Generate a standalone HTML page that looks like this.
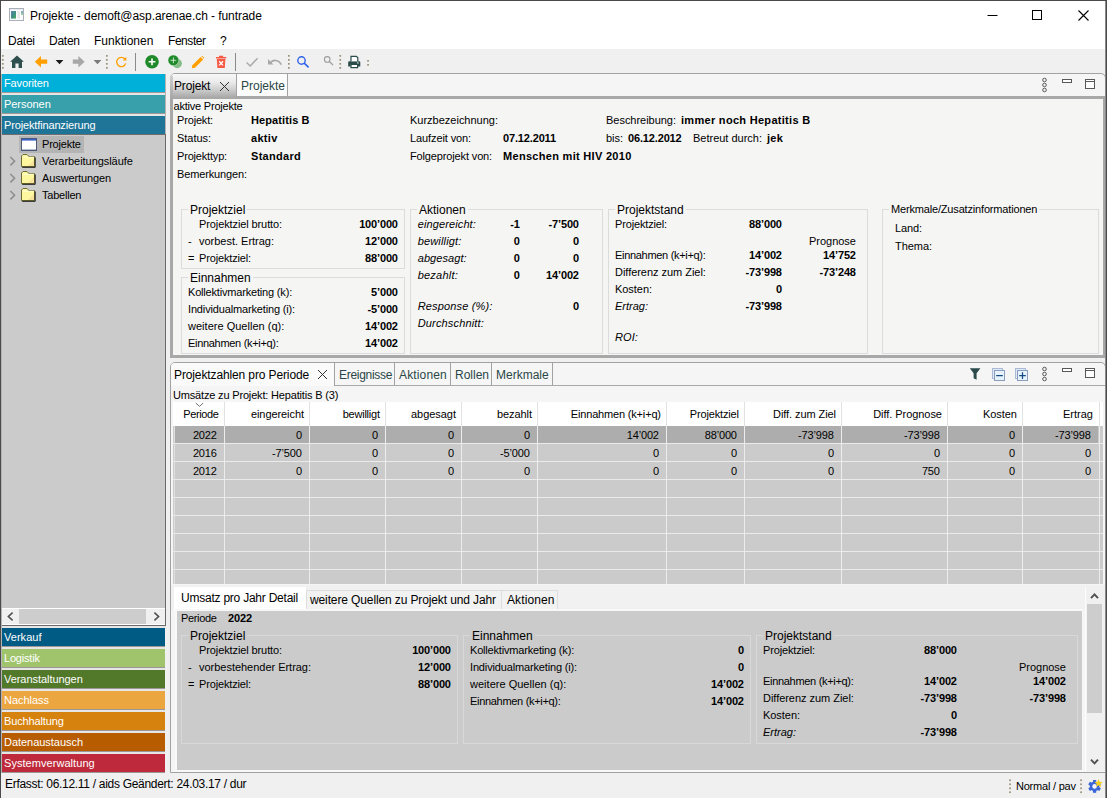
<!DOCTYPE html>
<html><head><meta charset="utf-8"><title>Projekte</title>
<style>
*{box-sizing:border-box;margin:0;padding:0}
html,body{width:1107px;height:798px;overflow:hidden;background:#f0f0f0}
body{font-family:"Liberation Sans",sans-serif;font-size:11px;color:#000;position:relative}
.a{position:absolute}
.t{position:absolute;white-space:nowrap;font-size:11px;line-height:14px;height:14px}
.b{font-weight:bold}
.i{font-style:italic}
.r{text-align:right}
.ui{font-size:12px;line-height:16px;height:16px}
.tl{color:#2a4646}
.bar{position:absolute;left:2px;width:163px;height:18px;color:#fff;font-size:11px;line-height:18px;padding-left:2px;white-space:nowrap}
.gap{position:absolute;left:2px;width:163px;height:1px}
.ar{font-size:11px !important}
.lg{position:absolute;white-space:nowrap;font-size:12px;line-height:14px;height:14px;padding:0 2px}
</style></head><body>
<div class="a" style="left:0px;top:0px;width:1107px;height:798px;border:1px solid #4a4a4a;border-bottom:none"></div>
<div class="a" style="left:1px;top:1px;width:1105px;height:48px;background:#fff"></div>
<svg class="a" style="left:9px;top:8px" width="16" height="14" viewBox="0 0 16 14"><defs><linearGradient id="ig" x1="0" y1="0" x2="1" y2="1"><stop offset="0" stop-color="#5a86b8"/><stop offset="0.5" stop-color="#3e8e84"/><stop offset="1" stop-color="#4cae5c"/></linearGradient><linearGradient id="ig2" x1="0" y1="0" x2="0" y2="1"><stop offset="0" stop-color="#7a9ec8"/><stop offset="1" stop-color="#a4dc98"/></linearGradient></defs><rect x="0.5" y="0.5" width="14" height="12" fill="#fbfbfb" stroke="#a9b0b8"/><rect x="1" y="1" width="13" height="1" fill="#e6eaee"/><rect x="2" y="3" width="5" height="7.6" fill="url(#ig)"/><rect x="8.6" y="3" width="2.2" height="7.6" fill="#e6e6e6"/><rect x="12" y="3" width="2" height="4" fill="url(#ig2)"/></svg>
<div class="t ui" style="left:30px;top:8px;letter-spacing:-0.06px">Projekte - demoft@asp.arenae.ch - funtrade</div>
<svg class="a" style="left:980px;top:5px" width="120" height="22" viewBox="0 0 120 22"><path d="M7.5 10.5h10" stroke="#000" stroke-width="1" fill="none"/><rect x="52.5" y="5.5" width="9" height="9" fill="none" stroke="#000" stroke-width="1"/><path d="M98.5 5.5l10 10M108.5 5.5l-10 10" stroke="#000" stroke-width="1.1" fill="none"/></svg>
<div class="t ui" style="left:8px;top:33px;letter-spacing:-0.25px">Datei</div>
<div class="t ui" style="left:49px;top:33px;letter-spacing:-0.25px">Daten</div>
<div class="t ui" style="left:94px;top:33px">Funktionen</div>
<div class="t ui" style="left:168px;top:33px;letter-spacing:-0.45px">Fenster</div>
<div class="t ui" style="left:220px;top:33px">?</div>
<div class="a" style="left:1px;top:49px;width:1105px;height:25px;background:#f0f0f0"></div>
<svg class="a" style="left:0;top:50px" width="380" height="24" viewBox="0 0 380 24">
<defs><g id="hd"><rect x="0" y="0" width="1.7" height="1.7" fill="#989178"/><rect x="0" y="4" width="1.7" height="1.7" fill="#989178"/><rect x="0" y="8" width="1.7" height="1.7" fill="#989178"/><rect x="0" y="12" width="1.7" height="1.7" fill="#989178"/></g></defs>
<use href="#hd" x="2" y="5"/>
<!-- home -->
<path d="M17 5.6 L23.9 11.8 H22 V18 H18.6 V13.6 H15.4 V18 H12 V11.8 H10.1 Z" fill="#2f4f4f"/>
<!-- back -->
<path d="M34.8 11.7 L41 6 V9.6 H47.2 V13.8 H41 V17.4 Z" fill="#ffa000"/>
<path d="M55.6 10 H63.4 L59.5 14.3 Z" fill="#1a1a1a"/>
<!-- fwd -->
<path d="M84.6 11.7 L78.4 6 V9.6 H72.8 V13.8 H78.4 V17.4 Z" fill="#a6a6a6"/>
<path d="M93.6 10 H101.4 L97.5 14.3 Z" fill="#7a7a7a"/>
<use href="#hd" x="106" y="5"/>
<!-- refresh -->
<path d="M124.8 9 A4.6 4.6 0 1 0 125.7 13.4" fill="none" stroke="#ffa000" stroke-width="1.35"/>
<path d="M126.4 6.8 V10.4 H122.8 Z" fill="#ffa000"/>
<rect x="135" y="3" width="1" height="18" fill="#8a8a8a"/>
<!-- add -->
<circle cx="152" cy="11.8" r="6.8" fill="#1e8a2a"/>
<path d="M152 8.4 V15.2 M148.6 11.8 H155.4" stroke="#fff" stroke-width="1.6" fill="none"/>
<!-- add copy -->
<circle cx="177.2" cy="13.5" r="4.7" fill="#86bc88"/>
<circle cx="173.4" cy="10.3" r="5.4" fill="#1e8a2a" stroke="#dcecdc" stroke-width="0.5"/>
<path d="M173.4 7.4 V13.2 M170.5 10.3 H176.3" stroke="#e8f6e8" stroke-width="0.8" fill="none"/>
<!-- pencil -->
<path d="M191.8 18.3 L192.4 15.2 L200.6 7 L203.2 9.6 L195 17.8 Z" fill="#ffa000"/>
<path d="M201.4 6.2 L202.4 5.9 L204.2 7.7 L203.9 8.8 Z" fill="#ffa000"/>
<!-- trash -->
<path d="M216 7 H226.2 V8.4 H216 Z M219 5.8 H223.2 V7 H219 Z M216.8 9 H225.4 L224.8 18 H217.4 Z" fill="#f65a44"/>
<path d="M219.2 11.2 L223 15.4 M223 11.2 L219.2 15.4" stroke="#fff" stroke-width="1.3" fill="none"/>
<rect x="235" y="3" width="1" height="18" fill="#8a8a8a"/>
<!-- check -->
<path d="M246.6 12.6 L250.2 16 L257.6 8.2" fill="none" stroke="#a8a8a8" stroke-width="1.4"/>
<!-- undo -->
<path d="M268 9 V14.4 H273.4 Z" fill="#a8a8a8"/>
<path d="M270.4 12.6 C273.4 9.4 278.4 9.4 281.4 14.6" fill="none" stroke="#a8a8a8" stroke-width="1.6"/>
<use href="#hd" x="288" y="5"/>
<!-- search -->
<circle cx="301.5" cy="10.5" r="3.7" fill="none" stroke="#2f62ea" stroke-width="1.4"/>
<path d="M304.2 13.2 L308.6 17.4" stroke="#2f62ea" stroke-width="1.6" fill="none"/>
<circle cx="327.2" cy="9.4" r="2.8" fill="none" stroke="#9c9c9c" stroke-width="1.1"/>
<path d="M329.2 11.4 L333 15" stroke="#9c9c9c" stroke-width="1.3" fill="none"/>
<use href="#hd" x="339.4" y="5"/>
<!-- print -->
<path d="M348.2 12.2 Q348.2 11.2 349.2 11.2 H359.3 Q360.3 11.2 360.3 12.2 V16.4 H358 V14.6 H350.6 V16.4 H348.2 Z" fill="#2a4a4a"/>
<path d="M351 11.2 V6.4 H356.4 L357.8 7.8 V11.2" fill="#fff" stroke="#2a4a4a" stroke-width="1.2"/>
<path d="M351 14.4 H357.6 V17.6 H351 Z" fill="#fff" stroke="#2a4a4a" stroke-width="1.2"/>
<rect x="357" y="12.4" width="1.6" height="1.1" fill="#dfe6e6"/>
<rect x="367.2" y="10" width="1.7" height="1.7" fill="#989178"/><rect x="367.2" y="14" width="1.7" height="1.7" fill="#989178"/>
</svg>
<div class="a" style="left:1px;top:74px;width:1px;height:699px;background:#b4b4b4"></div>
<div class="bar" style="top:74px;background:#00b0d8;letter-spacing:-0.125px">Favoriten</div>
<div class="gap" style="top:92px;background:#9c9696"></div>
<div class="gap" style="top:93px;height:2px;background:#e6e6e6"></div>
<div class="bar" style="top:95px;background:#38a0aa;letter-spacing:-0.041px">Personen</div>
<div class="gap" style="top:113px;background:#9c9696"></div>
<div class="gap" style="top:114px;height:2px;background:#e6e6e6"></div>
<div class="bar" style="top:116px;background:#1e7598;letter-spacing:-0.144px">Projektfinanzierung</div>
<div class="gap" style="top:134px;background:#9c9696"></div>
<div class="gap" style="top:135px;height:2px;background:#e6e6e6"></div>
<div class="a" style="left:2px;top:134px;width:164px;height:475px;background:#cbcbcb;border-top:1px solid #6e6e6e"></div>
<div class="a" style="left:19px;top:136px;width:65px;height:17px;background:#b4b4b4"></div>
<svg class="a" style="left:21px;top:138px" width="16" height="13" viewBox="0 0 16 13"><rect x="0.5" y="0.5" width="15" height="12" fill="#fff" stroke="#4a5a78"/><rect x="1" y="1" width="14" height="1.6" fill="#3a64c8"/><rect x="1" y="11" width="14" height="1" fill="#b8c0d0"/></svg>
<div class="t " style="left:42px;top:137px;letter-spacing:-0.2px">Projekte</div>
<svg class="a" style="left:9px;top:156px" width="8" height="11" viewBox="0 0 8 11"><path d="M1.4 1 L5.6 5.2 L1.4 9.4" fill="none" stroke="#8c8c8c" stroke-width="1.5"/></svg>
<svg class="a" style="left:21px;top:154px" width="15" height="14" viewBox="0 0 15 14"><path d="M0.5 12.5 V2 L2 0.5 H6 L7.5 2 V2.5 H13.5 V12.5 Z" fill="#fdf7a0" stroke="#6e6a30" stroke-width="1"/><path d="M1.5 3.2 H12.8" stroke="#ffffd8" stroke-width="1"/><path d="M7 12 L13 6 V12 Z" fill="#f6dc9a" opacity="0.8"/><path d="M14.2 3.5 V13.3 H1.2" fill="none" stroke="#1a1a1a" stroke-width="1"/></svg>
<div class="t " style="left:42px;top:154px;letter-spacing:-0.05px">Verarbeitungsläufe</div>
<svg class="a" style="left:9px;top:173px" width="8" height="11" viewBox="0 0 8 11"><path d="M1.4 1 L5.6 5.2 L1.4 9.4" fill="none" stroke="#8c8c8c" stroke-width="1.5"/></svg>
<svg class="a" style="left:21px;top:171px" width="15" height="14" viewBox="0 0 15 14"><path d="M0.5 12.5 V2 L2 0.5 H6 L7.5 2 V2.5 H13.5 V12.5 Z" fill="#fdf7a0" stroke="#6e6a30" stroke-width="1"/><path d="M1.5 3.2 H12.8" stroke="#ffffd8" stroke-width="1"/><path d="M7 12 L13 6 V12 Z" fill="#f6dc9a" opacity="0.8"/><path d="M14.2 3.5 V13.3 H1.2" fill="none" stroke="#1a1a1a" stroke-width="1"/></svg>
<div class="t " style="left:42px;top:171px;letter-spacing:-0.1px">Auswertungen</div>
<svg class="a" style="left:9px;top:190px" width="8" height="11" viewBox="0 0 8 11"><path d="M1.4 1 L5.6 5.2 L1.4 9.4" fill="none" stroke="#8c8c8c" stroke-width="1.5"/></svg>
<svg class="a" style="left:21px;top:188px" width="15" height="14" viewBox="0 0 15 14"><path d="M0.5 12.5 V2 L2 0.5 H6 L7.5 2 V2.5 H13.5 V12.5 Z" fill="#fdf7a0" stroke="#6e6a30" stroke-width="1"/><path d="M1.5 3.2 H12.8" stroke="#ffffd8" stroke-width="1"/><path d="M7 12 L13 6 V12 Z" fill="#f6dc9a" opacity="0.8"/><path d="M14.2 3.5 V13.3 H1.2" fill="none" stroke="#1a1a1a" stroke-width="1"/></svg>
<div class="t " style="left:42px;top:188px;letter-spacing:-0.22px">Tabellen</div>
<div class="a" style="left:2px;top:608px;width:163px;height:17px;background:#fff"></div>
<div class="a" style="left:2px;top:609px;width:163px;height:15px;background:#f0f0f0"></div>
<div class="a" style="left:19px;top:609px;width:127px;height:15px;background:#cdcdcd"></div>
<svg class="a" style="left:2px;top:609px" width="163" height="15" viewBox="0 0 163 15"><path d="M10.6 3.6 L6.4 7.5 L10.6 11.4" fill="none" stroke="#505050" stroke-width="1.6"/><path d="M152.4 3.6 L156.6 7.5 L152.4 11.4" fill="none" stroke="#505050" stroke-width="1.6"/></svg>
<div class="a" style="left:2px;top:625px;width:164px;height:1px;background:#6a6a6a"></div>
<div class="a" style="left:165px;top:134px;width:1px;height:492px;background:#6a6a6a"></div>
<div class="a" style="left:165px;top:74px;width:1px;height:60px;background:#b8b2b2"></div>
<div class="a" style="left:2px;top:626px;width:164px;height:2px;background:#e6e6e6"></div>
<div class="bar" style="top:628px;background:#005b84;letter-spacing:0.030px">Verkauf</div>
<div class="gap" style="top:646px;background:#9c9696"></div>
<div class="gap" style="top:647px;height:2px;background:#e6e6e6"></div>
<div class="bar" style="top:649px;background:#a0c46c;letter-spacing:-0.192px">Logistik</div>
<div class="gap" style="top:667px;background:#9c9696"></div>
<div class="gap" style="top:668px;height:2px;background:#e6e6e6"></div>
<div class="bar" style="top:670px;background:#52782a;letter-spacing:-0.054px">Veranstaltungen</div>
<div class="gap" style="top:688px;background:#9c9696"></div>
<div class="gap" style="top:689px;height:2px;background:#e6e6e6"></div>
<div class="bar" style="top:691px;background:#eca640;letter-spacing:-0.035px">Nachlass</div>
<div class="gap" style="top:709px;background:#9c9696"></div>
<div class="gap" style="top:710px;height:2px;background:#e6e6e6"></div>
<div class="bar" style="top:712px;background:#d6820e;letter-spacing:-0.136px">Buchhaltung</div>
<div class="gap" style="top:730px;background:#9c9696"></div>
<div class="gap" style="top:731px;height:2px;background:#e6e6e6"></div>
<div class="bar" style="top:733px;background:#b85c00;letter-spacing:-0.034px">Datenaustausch</div>
<div class="gap" style="top:751px;background:#9c9696"></div>
<div class="gap" style="top:752px;height:2px;background:#e6e6e6"></div>
<div class="bar" style="top:754px;background:#be2a3c;letter-spacing:0.053px">Systemverwaltung</div>
<div class="gap" style="top:772px;background:#9c9696"></div>
<div class="gap" style="top:773px;height:2px;background:#e6e6e6"></div>
<div class="a" style="left:170px;top:73px;width:936px;height:285px;border:1px solid #a2a2a2;border-radius:5px 5px 0 0;background:#f5f5f5"></div>
<div class="a" style="left:170px;top:96px;width:936px;height:262px;border:3px solid #a8a8a8;background:#f5f5f4"></div>
<div class="a" style="left:171px;top:74px;width:66px;height:23px;background:linear-gradient(#f8f8f8 0%,#ebebeb 35%,#cdcdcd 68%,#aaaaaa 100%);border-right:1px solid #a2a2a2;border-radius:4px 0 0 0"></div>
<div class="a" style="left:170px;top:76px;width:3px;height:21px;background:linear-gradient(#cfcfcf,#a8a8a8)"></div>
<div class="t ui" style="left:174px;top:78px;letter-spacing:-0.15px">Projekt</div>
<svg class="a" style="left:219px;top:81px" width="11" height="11" viewBox="0 0 11 11"><path d="M1 1 L10 10 M10 1 L1 10" stroke="#303030" stroke-width="1" fill="none"/></svg>
<div class="a" style="left:237px;top:74px;width:51px;height:22px;background:#fcfcfc;border-right:1px solid #a2a2a2"></div>
<div class="t ui tl" style="left:241px;top:78px">Projekte</div>
<svg class="a" style="left:1037px;top:75px" width="70" height="18" viewBox="0 0 70 18"><g fill="none" stroke="#585858" stroke-width="1"><circle cx="7.5" cy="5" r="1.8"/><circle cx="7.5" cy="10" r="1.8"/><circle cx="7.5" cy="15" r="1.8"/><rect x="25.5" y="4.5" width="9" height="3" fill="#fff"/><rect x="48.5" y="4.5" width="9" height="9" fill="#fff"/><path d="M48.5 6.5 H57.5"/></g></svg>
<div class="t " style="left:173.5px;top:99px;letter-spacing:-0.21px">aktive Projekte</div>
<div class="t " style="left:177px;top:113px;letter-spacing:-0.161px">Projekt:</div>
<div class="t b" style="left:251px;top:113px;letter-spacing:0.1px">Hepatitis B</div>
<div class="t " style="left:177px;top:131px;letter-spacing:-0.034px">Status:</div>
<div class="t b" style="left:251px;top:131px;letter-spacing:0.3px">aktiv</div>
<div class="t " style="left:177px;top:149px;letter-spacing:-0.179px">Projekttyp:</div>
<div class="t b" style="left:251px;top:149px;letter-spacing:0.3px">Standard</div>
<div class="t " style="left:177px;top:167px;letter-spacing:-0.129px">Bemerkungen:</div>
<div class="t " style="left:410px;top:113px;letter-spacing:-0.004px">Kurzbezeichnung:</div>
<div class="t " style="left:410px;top:131px;letter-spacing:-0.106px">Laufzeit von:</div>
<div class="t b" style="left:503px;top:131px;letter-spacing:-0.15px">07.12.2011</div>
<div class="t " style="left:410px;top:149px;letter-spacing:-0.14px">Folgeprojekt von:</div>
<div class="t b" style="left:503px;top:149px;letter-spacing:0.3px">Menschen mit HIV 2010</div>
<div class="t " style="left:606px;top:113px;letter-spacing:-0.025px">Beschreibung:</div>
<div class="t b" style="left:681px;top:113px;letter-spacing:0.3px">immer noch Hepatitis B</div>
<div class="t " style="left:606px;top:131px;letter-spacing:-0.029px">bis:</div>
<div class="t b" style="left:628px;top:131px;letter-spacing:-0.15px">06.12.2012</div>
<div class="t " style="left:693px;top:131px;letter-spacing:-0.007px">Betreut durch:</div>
<div class="t b" style="left:767px;top:131px;letter-spacing:0.3px">jek</div>
<div class="a" style="left:181px;top:209px;width:224px;height:60px;border:1px solid #dcdcdc"></div>
<div class="lg" style="left:188px;top:203px;background:#f5f5f4">Projektziel</div>
<div class="t " style="left:199px;top:217px;letter-spacing:-0.104px">Projektziel brutto:</div>
<div class="t r b" style="left:307.85px;width:90px;top:217px;letter-spacing:-0.15px">100’000</div>
<div class="t " style="left:188px;top:234px;letter-spacing:0.337px">-</div>
<div class="t " style="left:199px;top:234px;letter-spacing:-0.012px">vorbest. Ertrag:</div>
<div class="t r b" style="left:307.85px;width:90px;top:234px;letter-spacing:-0.15px">12’000</div>
<div class="t " style="left:188px;top:251px;letter-spacing:-0.424px">=</div>
<div class="t " style="left:199px;top:251px;letter-spacing:-0.15px">Projektziel:</div>
<div class="t r b" style="left:307.85px;width:90px;top:251px;letter-spacing:-0.15px">88’000</div>
<div class="a" style="left:181px;top:277px;width:224px;height:77px;border:1px solid #dcdcdc"></div>
<div class="lg" style="left:188px;top:271px;background:#f5f5f4">Einnahmen</div>
<div class="t " style="left:188px;top:285px;letter-spacing:-0.182px">Kollektivmarketing (k):</div>
<div class="t r b" style="left:307.85px;width:90px;top:285px;letter-spacing:-0.15px">5’000</div>
<div class="t " style="left:188px;top:302px;letter-spacing:-0.152px">Individualmarketing (i):</div>
<div class="t r b" style="left:307.85px;width:90px;top:302px;letter-spacing:-0.15px">-5’000</div>
<div class="t " style="left:188px;top:319px;letter-spacing:0.016px">weitere Quellen (q):</div>
<div class="t r b" style="left:307.85px;width:90px;top:319px;letter-spacing:-0.15px">14’002</div>
<div class="t " style="left:188px;top:336px;letter-spacing:-0.307px">Einnahmen (k+i+q):</div>
<div class="t r b" style="left:307.85px;width:90px;top:336px;letter-spacing:-0.15px">14’002</div>
<div class="a" style="left:410px;top:209px;width:193px;height:145px;border:1px solid #dcdcdc"></div>
<div class="lg" style="left:417px;top:203px;background:#f5f5f4">Aktionen</div>
<div class="t i" style="left:417.7px;top:217px;letter-spacing:0.118px">eingereicht:</div>
<div class="t r b" style="left:429.65px;width:90px;top:217px;letter-spacing:-0.15px">-1</div>
<div class="t r b" style="left:488.85px;width:90px;top:217px;letter-spacing:-0.15px">-7’500</div>
<div class="t i" style="left:417.7px;top:234px;letter-spacing:0.162px">bewilligt:</div>
<div class="t r b" style="left:429.65px;width:90px;top:234px;letter-spacing:-0.15px">0</div>
<div class="t r b" style="left:488.85px;width:90px;top:234px;letter-spacing:-0.15px">0</div>
<div class="t i" style="left:417.7px;top:251px;letter-spacing:0.075px">abgesagt:</div>
<div class="t r b" style="left:429.65px;width:90px;top:251px;letter-spacing:-0.15px">0</div>
<div class="t r b" style="left:488.85px;width:90px;top:251px;letter-spacing:-0.15px">0</div>
<div class="t i" style="left:417.7px;top:268px;letter-spacing:0.214px">bezahlt:</div>
<div class="t r b" style="left:429.65px;width:90px;top:268px;letter-spacing:-0.15px">0</div>
<div class="t r b" style="left:488.85px;width:90px;top:268px;letter-spacing:-0.15px">14’002</div>
<div class="t i" style="left:417.7px;top:299px;letter-spacing:0.156px">Response (%):</div>
<div class="t r b" style="left:488.85px;width:90px;top:299px;letter-spacing:-0.15px">0</div>
<div class="t i" style="left:417.7px;top:316px;letter-spacing:0.162px">Durchschnitt:</div>
<div class="a" style="left:608px;top:209px;width:260px;height:145px;border:1px solid #dcdcdc"></div>
<div class="lg" style="left:615px;top:203px;background:#f5f5f4">Projektstand</div>
<div class="t " style="left:615px;top:217px;letter-spacing:-0.15px">Projektziel:</div>
<div class="t r b" style="left:691.85px;width:90px;top:217px;letter-spacing:-0.15px">88’000</div>
<div class="t r " style="left:765.99px;width:90px;top:234px;letter-spacing:-0.011px">Prognose</div>
<div class="t " style="left:615px;top:248px;letter-spacing:-0.307px">Einnahmen (k+i+q):</div>
<div class="t r b" style="left:691.85px;width:90px;top:248px;letter-spacing:-0.15px">14’002</div>
<div class="t r b" style="left:765.85px;width:90px;top:248px;letter-spacing:-0.15px">14’752</div>
<div class="t " style="left:615px;top:265px;letter-spacing:-0.036px">Differenz zum Ziel:</div>
<div class="t r b" style="left:691.85px;width:90px;top:265px;letter-spacing:-0.15px">-73’998</div>
<div class="t r b" style="left:765.85px;width:90px;top:265px;letter-spacing:-0.15px">-73’248</div>
<div class="t " style="left:615px;top:282px;letter-spacing:-0.043px">Kosten:</div>
<div class="t r b" style="left:691.85px;width:90px;top:282px;letter-spacing:-0.15px">0</div>
<div class="t i" style="left:615px;top:299px;letter-spacing:-0.002px">Ertrag:</div>
<div class="t r b" style="left:691.85px;width:90px;top:299px;letter-spacing:-0.15px">-73’998</div>
<div class="t i" style="left:615px;top:330px;letter-spacing:0.097px">ROI:</div>
<div class="a" style="left:882px;top:209px;width:217px;height:145px;border:1px solid #dcdcdc"></div>
<div class="lg ar" style="left:889px;top:202px;background:#f5f5f4;letter-spacing:-0.17px">Merkmale/Zusatzinformationen</div>
<div class="t " style="left:895px;top:221px;letter-spacing:-0.105px">Land:</div>
<div class="t " style="left:895px;top:239px;letter-spacing:-0.049px">Thema:</div>
<div class="a" style="left:170px;top:362px;width:936px;height:411px;border:1px solid #a2a2a2;border-radius:5px 5px 0 0;background:#f5f5f5"></div>
<div class="a" style="left:171px;top:385px;width:934px;height:1px;background:#a8a8a8"></div>
<div class="a" style="left:171px;top:363px;width:164px;height:23px;background:#fafafa;border-right:1px solid #a2a2a2;border-radius:4px 0 0 0"></div>
<div class="t ui" style="left:174px;top:367px;letter-spacing:-0.12px">Projektzahlen pro Periode</div>
<svg class="a" style="left:317px;top:369.4px" width="11" height="11" viewBox="0 0 11 11"><path d="M1 1 L10 10 M10 1 L1 10" stroke="#303030" stroke-width="1" fill="none"/></svg>
<div class="a" style="left:335px;top:363px;width:60px;height:22px;background:#f6f6f6;border-right:1px solid #a2a2a2"></div>
<div class="t ui tl" style="left:339px;top:367px;letter-spacing:-0.3px">Ereignisse</div>
<div class="a" style="left:395px;top:363px;width:56px;height:22px;background:#f6f6f6;border-right:1px solid #a2a2a2"></div>
<div class="t ui tl" style="left:399px;top:367px;letter-spacing:0.15px">Aktionen</div>
<div class="a" style="left:451px;top:363px;width:41px;height:22px;background:#f6f6f6;border-right:1px solid #a2a2a2"></div>
<div class="t ui tl" style="left:455px;top:367px">Rollen</div>
<div class="a" style="left:492px;top:363px;width:61px;height:22px;background:#f6f6f6;border-right:1px solid #a2a2a2"></div>
<div class="t ui tl" style="left:496px;top:367px">Merkmale</div>
<svg class="a" style="left:966px;top:364px" width="70" height="20" viewBox="0 0 70 20"><path d="M3.8 4.2 H14.4 L10.6 9.2 V15.8 L7.6 14.2 V9.2 Z" fill="#2a4a4a"/><g stroke-width="1"><rect x="26.5" y="4.5" width="10" height="10" fill="#dfeaf6" stroke="#a9b9d6"/><rect x="28.5" y="6.5" width="10" height="10" fill="#e6f2fc" stroke="#8c9cbc"/><path d="M30.2 11.6 H36.8" stroke="#144a86" stroke-width="1.25" fill="none"/><rect x="49.5" y="4.5" width="10" height="10" fill="#dfeaf6" stroke="#a9b9d6"/><rect x="51.5" y="6.5" width="10" height="10" fill="#e6f2fc" stroke="#8c9cbc"/><path d="M53.2 11.6 H59.8 M56.5 8.3 V14.9" stroke="#144a86" stroke-width="1.25" fill="none"/></g></svg>
<svg class="a" style="left:1037px;top:364px" width="70" height="18" viewBox="0 0 70 18"><g fill="none" stroke="#585858" stroke-width="1"><circle cx="7.5" cy="5" r="1.8"/><circle cx="7.5" cy="10" r="1.8"/><circle cx="7.5" cy="15" r="1.8"/><rect x="25.5" y="4.5" width="9" height="3" fill="#fff"/><rect x="48.5" y="4.5" width="9" height="9" fill="#fff"/><path d="M48.5 6.5 H57.5"/></g></svg>
<div class="t " style="left:173px;top:388px;letter-spacing:-0.17px">Umsätze zu Projekt: Hepatitis B (3)</div>
<div class="a" style="left:173px;top:402px;width:930px;height:24px;background:#fff"></div>
<div class="a" style="left:173px;top:426px;width:930px;height:158px;background:#cbcbcb"></div>
<div class="a" style="left:175px;top:426px;width:923px;height:17px;background:#adadad"></div>
<div class="a" style="left:173px;top:443px;width:930px;height:1px;background:#ebebeb"></div>
<div class="a" style="left:173px;top:461px;width:930px;height:1px;background:#ebebeb"></div>
<div class="a" style="left:173px;top:479px;width:930px;height:1px;background:#ebebeb"></div>
<div class="a" style="left:173px;top:497px;width:930px;height:1px;background:#ebebeb"></div>
<div class="a" style="left:173px;top:515px;width:930px;height:1px;background:#ebebeb"></div>
<div class="a" style="left:173px;top:533px;width:930px;height:1px;background:#ebebeb"></div>
<div class="a" style="left:173px;top:551px;width:930px;height:1px;background:#ebebeb"></div>
<div class="a" style="left:173px;top:569px;width:930px;height:1px;background:#ebebeb"></div>
<div class="a" style="left:173px;top:587px;width:930px;height:1px;background:#ebebeb"></div>
<div class="a" style="left:224px;top:402px;width:1px;height:24px;background:#e2e2e2"></div>
<div class="a" style="left:224px;top:426px;width:1px;height:158px;background:#ececec"></div>
<div class="a" style="left:309px;top:402px;width:1px;height:24px;background:#e2e2e2"></div>
<div class="a" style="left:309px;top:426px;width:1px;height:158px;background:#ececec"></div>
<div class="a" style="left:385px;top:402px;width:1px;height:24px;background:#e2e2e2"></div>
<div class="a" style="left:385px;top:426px;width:1px;height:158px;background:#ececec"></div>
<div class="a" style="left:461px;top:402px;width:1px;height:24px;background:#e2e2e2"></div>
<div class="a" style="left:461px;top:426px;width:1px;height:158px;background:#ececec"></div>
<div class="a" style="left:537px;top:402px;width:1px;height:24px;background:#e2e2e2"></div>
<div class="a" style="left:537px;top:426px;width:1px;height:158px;background:#ececec"></div>
<div class="a" style="left:666px;top:402px;width:1px;height:24px;background:#e2e2e2"></div>
<div class="a" style="left:666px;top:426px;width:1px;height:158px;background:#ececec"></div>
<div class="a" style="left:744px;top:402px;width:1px;height:24px;background:#e2e2e2"></div>
<div class="a" style="left:744px;top:426px;width:1px;height:158px;background:#ececec"></div>
<div class="a" style="left:841px;top:402px;width:1px;height:24px;background:#e2e2e2"></div>
<div class="a" style="left:841px;top:426px;width:1px;height:158px;background:#ececec"></div>
<div class="a" style="left:947px;top:402px;width:1px;height:24px;background:#e2e2e2"></div>
<div class="a" style="left:947px;top:426px;width:1px;height:158px;background:#ececec"></div>
<div class="a" style="left:1022px;top:402px;width:1px;height:24px;background:#e2e2e2"></div>
<div class="a" style="left:1022px;top:426px;width:1px;height:158px;background:#ececec"></div>
<div class="a" style="left:1099px;top:402px;width:1px;height:24px;background:#e2e2e2"></div>
<div class="a" style="left:1099px;top:426px;width:1px;height:158px;background:#ececec"></div>
<div class="a" style="left:174px;top:426px;width:1px;height:158px;background:#e0e0e0"></div>
<svg class="a" style="left:195px;top:402px" width="9" height="6" viewBox="0 0 9 6"><path d="M0.8 1 L4.5 4.4 L8.2 1" fill="none" stroke="#707070" stroke-width="1"/></svg>
<div class="t r " style="left:128.65px;width:90px;top:407px;letter-spacing:-0.351px">Periode</div>
<div class="t r " style="left:213.93px;width:90px;top:407px;letter-spacing:-0.074px">eingereicht</div>
<div class="t r " style="left:289.76px;width:90px;top:407px;letter-spacing:-0.236px">bewilligt</div>
<div class="t r " style="left:365.97px;width:90px;top:407px;letter-spacing:-0.033px">abgesagt</div>
<div class="t r " style="left:441.93px;width:90px;top:407px;letter-spacing:-0.067px">bezahlt</div>
<div class="t r " style="left:570.83px;width:90px;top:407px;letter-spacing:-0.173px">Einnahmen (k+i+q)</div>
<div class="t r " style="left:648.84px;width:90px;top:407px;letter-spacing:-0.158px">Projektziel</div>
<div class="t r " style="left:745.92px;width:90px;top:407px;letter-spacing:-0.084px">Diff. zum Ziel</div>
<div class="t r " style="left:851.95px;width:90px;top:407px;letter-spacing:-0.05px">Diff. Prognose</div>
<div class="t r " style="left:926.96px;width:90px;top:407px;letter-spacing:-0.041px">Kosten</div>
<div class="t r " style="left:1003.01px;width:90px;top:407px;letter-spacing:0.008px">Ertrag</div>
<div class="t r " style="left:126.88px;width:90px;top:428px;letter-spacing:-0.118px">2022</div>
<div class="t r " style="left:211.88px;width:90px;top:428px;letter-spacing:-0.118px">0</div>
<div class="t r " style="left:287.88px;width:90px;top:428px;letter-spacing:-0.118px">0</div>
<div class="t r " style="left:363.88px;width:90px;top:428px;letter-spacing:-0.118px">0</div>
<div class="t r " style="left:439.88px;width:90px;top:428px;letter-spacing:-0.118px">0</div>
<div class="t r " style="left:568.83px;width:90px;top:428px;letter-spacing:-0.172px">14’002</div>
<div class="t r " style="left:646.83px;width:90px;top:428px;letter-spacing:-0.172px">88’000</div>
<div class="t r " style="left:743.9px;width:90px;top:428px;letter-spacing:-0.099px">-73’998</div>
<div class="t r " style="left:849.9px;width:90px;top:428px;letter-spacing:-0.099px">-73’998</div>
<div class="t r " style="left:924.88px;width:90px;top:428px;letter-spacing:-0.118px">0</div>
<div class="t r " style="left:1000.9px;width:90px;top:428px;letter-spacing:-0.099px">-73’998</div>
<div class="t r " style="left:126.88px;width:90px;top:446px;letter-spacing:-0.118px">2016</div>
<div class="t r " style="left:211.9px;width:90px;top:446px;letter-spacing:-0.096px">-7’500</div>
<div class="t r " style="left:287.88px;width:90px;top:446px;letter-spacing:-0.118px">0</div>
<div class="t r " style="left:363.88px;width:90px;top:446px;letter-spacing:-0.118px">0</div>
<div class="t r " style="left:439.9px;width:90px;top:446px;letter-spacing:-0.096px">-5’000</div>
<div class="t r " style="left:568.88px;width:90px;top:446px;letter-spacing:-0.118px">0</div>
<div class="t r " style="left:646.88px;width:90px;top:446px;letter-spacing:-0.118px">0</div>
<div class="t r " style="left:743.88px;width:90px;top:446px;letter-spacing:-0.118px">0</div>
<div class="t r " style="left:849.88px;width:90px;top:446px;letter-spacing:-0.118px">0</div>
<div class="t r " style="left:924.88px;width:90px;top:446px;letter-spacing:-0.118px">0</div>
<div class="t r " style="left:1000.88px;width:90px;top:446px;letter-spacing:-0.118px">0</div>
<div class="t r " style="left:126.88px;width:90px;top:464px;letter-spacing:-0.118px">2012</div>
<div class="t r " style="left:211.88px;width:90px;top:464px;letter-spacing:-0.118px">0</div>
<div class="t r " style="left:287.88px;width:90px;top:464px;letter-spacing:-0.118px">0</div>
<div class="t r " style="left:363.88px;width:90px;top:464px;letter-spacing:-0.118px">0</div>
<div class="t r " style="left:439.88px;width:90px;top:464px;letter-spacing:-0.118px">0</div>
<div class="t r " style="left:568.88px;width:90px;top:464px;letter-spacing:-0.118px">0</div>
<div class="t r " style="left:646.88px;width:90px;top:464px;letter-spacing:-0.118px">0</div>
<div class="t r " style="left:743.88px;width:90px;top:464px;letter-spacing:-0.118px">0</div>
<div class="t r " style="left:849.88px;width:90px;top:464px;letter-spacing:-0.118px">750</div>
<div class="t r " style="left:924.88px;width:90px;top:464px;letter-spacing:-0.118px">0</div>
<div class="t r " style="left:1000.88px;width:90px;top:464px;letter-spacing:-0.118px">0</div>
<div class="a" style="left:171px;top:585px;width:934px;height:25px;background:#f1f1f1"></div>
<div class="a" style="left:174px;top:587px;width:132px;height:24px;background:#fff"></div>
<div class="t ui" style="left:181px;top:590px;letter-spacing:-0.23px">Umsatz pro Jahr Detail</div>
<div class="a" style="left:306px;top:590px;width:196px;height:21px;background:#f2f2f2;border:1px solid #dedede;border-bottom:none"></div>
<div class="t ui" style="left:310px;top:592px;letter-spacing:-0.12px">weitere Quellen zu Projekt und Jahr</div>
<div class="a" style="left:501px;top:590px;width:57px;height:21px;background:#f2f2f2;border:1px solid #dedede;border-bottom:none"></div>
<div class="t ui" style="left:507px;top:592px;letter-spacing:0.1px">Aktionen</div>
<div class="a" style="left:175px;top:609px;width:908px;height:163px;background:#cbcbcb;border:2px solid #f8f8f8;border-right-width:1px"></div>
<div class="t " style="left:181px;top:611px;letter-spacing:-0.351px">Periode</div>
<div class="t b" style="left:228px;top:611px;letter-spacing:-0.15px">2022</div>
<div class="a" style="left:181px;top:635px;width:277px;height:109px;border:1px solid #d8d8d8"></div>
<div class="lg" style="left:188px;top:629px;background:#cbcbcb">Projektziel</div>
<div class="t " style="left:199px;top:643px;letter-spacing:-0.104px">Projektziel brutto:</div>
<div class="t r b" style="left:360.85px;width:90px;top:643px;letter-spacing:-0.15px">100’000</div>
<div class="t " style="left:188px;top:660px;letter-spacing:0.337px">-</div>
<div class="t " style="left:199px;top:660px;letter-spacing:-0.023px">vorbestehender Ertrag:</div>
<div class="t r b" style="left:360.85px;width:90px;top:660px;letter-spacing:-0.15px">12’000</div>
<div class="t " style="left:188px;top:677px;letter-spacing:-0.424px">=</div>
<div class="t " style="left:199px;top:677px;letter-spacing:-0.15px">Projektziel:</div>
<div class="t r b" style="left:360.85px;width:90px;top:677px;letter-spacing:-0.15px">88’000</div>
<div class="a" style="left:463px;top:635px;width:288px;height:109px;border:1px solid #d8d8d8"></div>
<div class="lg" style="left:470px;top:629px;background:#cbcbcb">Einnahmen</div>
<div class="t " style="left:470px;top:643px;letter-spacing:-0.182px">Kollektivmarketing (k):</div>
<div class="t r b" style="left:653.85px;width:90px;top:643px;letter-spacing:-0.15px">0</div>
<div class="t " style="left:470px;top:660px;letter-spacing:-0.152px">Individualmarketing (i):</div>
<div class="t r b" style="left:653.85px;width:90px;top:660px;letter-spacing:-0.15px">0</div>
<div class="t " style="left:470px;top:677px;letter-spacing:0.016px">weitere Quellen (q):</div>
<div class="t r b" style="left:653.85px;width:90px;top:677px;letter-spacing:-0.15px">14’002</div>
<div class="t " style="left:470px;top:694px;letter-spacing:-0.307px">Einnahmen (k+i+q):</div>
<div class="t r b" style="left:653.85px;width:90px;top:694px;letter-spacing:-0.15px">14’002</div>
<div class="a" style="left:756px;top:635px;width:322px;height:109px;border:1px solid #d8d8d8"></div>
<div class="lg" style="left:763px;top:629px;background:#cbcbcb">Projektstand</div>
<div class="t " style="left:763px;top:643px;letter-spacing:-0.15px">Projektziel:</div>
<div class="t r b" style="left:866.85px;width:90px;top:643px;letter-spacing:-0.15px">88’000</div>
<div class="t r " style="left:975.99px;width:90px;top:660px;letter-spacing:-0.011px">Prognose</div>
<div class="t " style="left:763px;top:674px;letter-spacing:-0.307px">Einnahmen (k+i+q):</div>
<div class="t r b" style="left:866.85px;width:90px;top:674px;letter-spacing:-0.15px">14’002</div>
<div class="t r b" style="left:975.85px;width:90px;top:674px;letter-spacing:-0.15px">14’002</div>
<div class="t " style="left:763px;top:691px;letter-spacing:-0.036px">Differenz zum Ziel:</div>
<div class="t r b" style="left:866.85px;width:90px;top:691px;letter-spacing:-0.15px">-73’998</div>
<div class="t r b" style="left:975.85px;width:90px;top:691px;letter-spacing:-0.15px">-73’998</div>
<div class="t " style="left:763px;top:708px;letter-spacing:-0.043px">Kosten:</div>
<div class="t r b" style="left:866.85px;width:90px;top:708px;letter-spacing:-0.15px">0</div>
<div class="t i" style="left:763px;top:725px;letter-spacing:-0.002px">Ertrag:</div>
<div class="t r b" style="left:866.85px;width:90px;top:725px;letter-spacing:-0.15px">-73’998</div>
<div class="a" style="left:1085px;top:587px;width:1px;height:184px;background:#fcfcfc"></div>
<div class="a" style="left:1087px;top:587px;width:18px;height:184px;background:#f0f0f0"></div>
<div class="a" style="left:1087px;top:604px;width:15px;height:109px;background:#cdcdcd"></div>
<svg class="a" style="left:1087px;top:587px" width="17" height="184" viewBox="0 0 17 184"><path d="M4 11.2 L7.5 7.4 L11 11.2" fill="none" stroke="#505050" stroke-width="1.9"/><path d="M4 172.6 L7.5 176.4 L11 172.6" fill="none" stroke="#505050" stroke-width="1.9"/></svg>
<div class="a" style="left:1px;top:773px;width:1105px;height:25px;background:#f0f0f0"></div>
<div class="t ui" style="left:5px;top:776px;letter-spacing:-0.3px">Erfasst: 06.12.11 / aids Geändert: 24.03.17 / dur</div>
<div class="t " style="left:1016px;top:778px;letter-spacing:-0.22px;line-height:16px;height:16px">Normal / pav</div>
<svg class="a" style="left:1005px;top:775.5px" width="100" height="20" viewBox="0 0 100 20"><g fill="#989178"><rect x="4.2" y="3.4" width="1.7" height="1.7"/><rect x="4.2" y="7.4" width="1.7" height="1.7"/><rect x="4.2" y="11.4" width="1.7" height="1.7"/><rect x="4.2" y="15.4" width="1.7" height="1.7"/><rect x="75.2" y="3.4" width="1.7" height="1.7"/><rect x="75.2" y="7.4" width="1.7" height="1.7"/><rect x="75.2" y="11.4" width="1.7" height="1.7"/><rect x="75.2" y="15.4" width="1.7" height="1.7"/></g><path d="M93.75 11.51 L95.15 12.40 L94.11 14.21 L92.64 13.44 L90.71 14.55 L90.64 16.21 L88.56 16.21 L88.49 14.55 L86.56 13.44 L85.09 14.21 L84.05 12.40 L85.45 11.51 L85.45 9.29 L84.05 8.40 L85.09 6.59 L86.56 7.36 L88.49 6.25 L88.56 4.59 L90.64 4.59 L90.71 6.25 L92.64 7.36 L94.11 6.59 L95.15 8.40 L93.75 9.29 Z" fill="#3b66d9" stroke="#3b66d9" stroke-width="1.2" stroke-linejoin="round"/><circle cx="89.6" cy="10.4" r="2.3" fill="#f4f4f8"/><polygon points="93.60,3.00 94.72,5.86 97.78,6.04 95.41,7.99 96.19,10.96 93.60,9.30 91.01,10.96 91.79,7.99 89.42,6.04 92.48,5.86" fill="#f8d020"/></svg>
<div class="a" style="left:1105px;top:1px;width:1px;height:797px;background:#8a8a8a"></div>
</body></html>
